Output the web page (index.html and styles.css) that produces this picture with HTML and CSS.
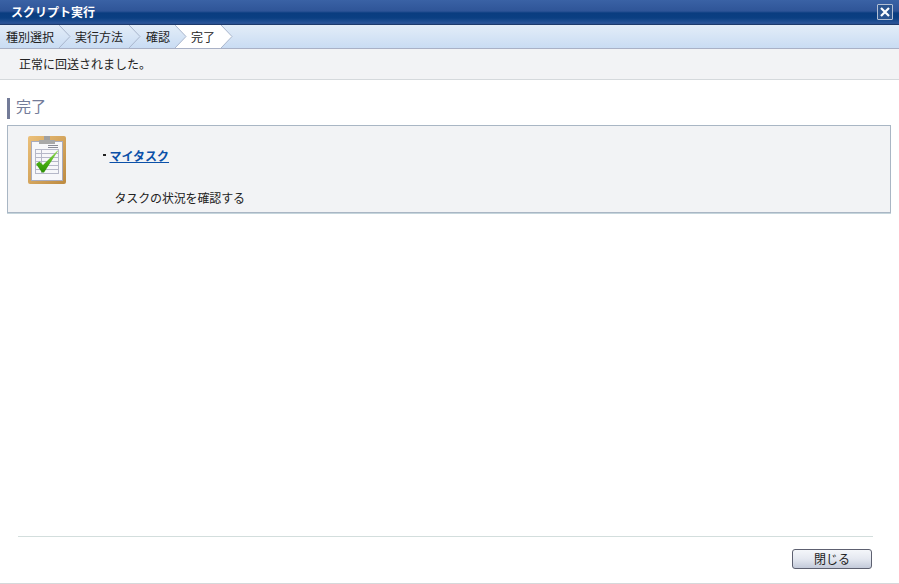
FILE: index.html
```html
<!DOCTYPE html>
<html lang="ja">
<head>
<meta charset="utf-8">
<title>スクリプト実行</title>
<link rel="stylesheet" href="styles.css">
</head>
<body>
<div class="app">
  <header class="titlebar">
    <h1 class="title">スクリプト実行</h1>
    <button class="close" aria-label="閉じる">
      <svg width="14" height="14" viewBox="0 0 14 14"><path d="M3 3l8 8M11 3l-8 8" stroke="#fff" stroke-width="2.2" fill="none"/></svg>
    </button>
  </header>
  <nav class="steps">
    <span class="step step-first">種別選択</span>
    <svg class="chev" width="12" height="23" viewBox="0 0 12 23"><path d="M0 0l11 11.5L0 23" fill="none" stroke="#a9b6cc"/></svg>
    <span class="step">実行方法</span>
    <svg class="chev" width="12" height="23" viewBox="0 0 12 23"><path d="M0 0l11 11.5L0 23" fill="none" stroke="#a9b6cc"/></svg>
    <span class="step step-narrow">確認</span>
    <svg class="chev chev-in" width="12" height="23" viewBox="0 0 12 23"><path d="M0 0h12v23H0l11-11.5z" fill="#fff"/><path d="M0 0l11 11.5L0 23" fill="none" stroke="#a9b6cc"/></svg>
    <span class="step step-current">完了</span>
    <svg class="chev" width="12" height="23" viewBox="0 0 12 23"><path d="M0 0l11 11.5L0 23z" fill="#fff"/><path d="M0 0l11 11.5L0 23" fill="none" stroke="#a9b6cc"/></svg>
  </nav>
  <div class="message">正常に回送されました。</div>
  <main class="content">
    <h2 class="heading">完了</h2>
    <section class="panel">
      <svg class="clip" width="38" height="48" viewBox="0 0 38 48">
        <defs>
          <linearGradient id="b" x1="0" y1="0" x2="1" y2="1"><stop offset="0" stop-color="#ecc07a"/><stop offset="1" stop-color="#bd8a40"/></linearGradient>
          <linearGradient id="g" x1="0" y1="0" x2="0" y2="1"><stop offset="0" stop-color="#9ade5c"/><stop offset=".6" stop-color="#45ab12"/><stop offset="1" stop-color="#2d8f06"/></linearGradient>
        </defs>
        <rect x="0" y="0" width="38" height="48" rx="2" fill="url(#b)"/>
        <rect x="3" y="5" width="32" height="40" fill="#a9abbd"/>
        <rect x="4" y="6" width="30" height="38" fill="#f7f7fa"/>
        <rect x="11" y="4" width="16" height="4" fill="#a8a8a8"/>
        <rect x="16" y="0" width="6" height="4" fill="#a0a0a0"/>
        <path d="M20 9.500h10M20 11.500h10" stroke="#8a8c98"/>
        <path d="M7 13.500h23M7 17.500h23M7 21.500h23M7 25.500h23M7 29.500h23M7 33.500h23M7 37.500h23M7.500 13v25M13.500 13v25M30.500 13v25" stroke="#b6b8c8" fill="none"/>
        <path d="M8 28l3.500-2.500 3.500 3.500L29.500 14.500l.5.5L16 36.500h-2z" fill="url(#g)"/>
      </svg>
      <div class="panel-body">
        <div class="link-row"><span class="bullet"></span><a class="link" href="#">マイタスク</a></div>
        <p class="desc">タスクの状況を確認する</p>
      </div>
    </section>
  </main>
  <footer class="footer">
    <button class="btn">閉じる</button>
  </footer>
</div>
</body>
</html>
```

FILE: styles.css
```css
* { box-sizing: border-box; }
html, body { margin: 0; height: 100%; }
body {
  background: #fff;
  color: #222;
  font-family: "Noto Sans CJK JP", "Liberation Sans", sans-serif;
  font-size: 12px;
  overflow: hidden;
}
.app { display: flex; flex-direction: column; height: 584px; width: 899px; }
.titlebar {
  height: 25px;
  display: flex;
  align-items: center;
  justify-content: space-between;
  padding: 0 6px 0 11px;
  background: linear-gradient(#3a62a5 0, #2f5598 11px, #0a3d80 13px, #0b3f82 18px, #2a5598 23px, #2a4f8f 24px);
  border-bottom: 1px solid #1d3a6c;
}
.title { margin: 0; font-size: 12px; font-weight: 700; color: #fff; line-height: 16px; }
.close {
  width: 16px; height: 16px; padding: 0;
  display: flex; align-items: center; justify-content: center;
  background: #2b548f;
  border: 1px solid #b4c0d4;
  border-radius: 1px;
}
.steps {
  height: 24px;
  display: flex;
  align-items: flex-start;
  background: linear-gradient(#e3edf8, #c9dcf3);
  border-bottom: 1px solid #a9b1c6;
}
.step { height: 23px; line-height: 23px; padding: 0 6px 0 4px; white-space: nowrap; color: #222; }
.step-first { padding: 0 5px 0 6px; }
.step-narrow { padding: 0 5px; }
.step-current { background: #fff; }
.chev { flex: none; display: block; }
.message {
  height: 31px;
  line-height: 30px;
  padding-left: 19px;
  background: #f2f3f5;
  border-bottom: 1px solid #d5d9dc;
}
.content { flex: 1; padding: 18px 8px 0 7px; }
.heading {
  margin: 0;
  height: 21px;
  line-height: 16px;
  border-left: 3px solid #737b98;
  padding-left: 6px;
  font-size: 15px;
  font-weight: 400;
  color: #737b98;
}
.panel {
  margin-top: 6px;
  height: 88px;
  display: flex;
  background: #f2f3f5;
  border: 1px solid #a9b6c4;
  box-shadow: 0 1px 0 #c5d5dc;
  padding: 10px 0 0 20px;
}
.clip { flex: none; display: block; }
.panel-body { margin-left: 37px; }
.link-row { display: flex; align-items: center; height: 18px; margin-top: 10px; }
.bullet { width: 3px; height: 2px; background: #222; margin-right: 4px; }
.link { color: #0b50a8; font-weight: 700; text-decoration: underline; margin-left: -0.5px; }
.desc { margin: 26px 0 0 11.5px; line-height: 16px; color: #222; letter-spacing: -0.15px; }
.footer {
  height: 47px;
  margin: 0 26px 0 18px;
  border-top: 1px solid #d3dedd;
  display: flex;
  justify-content: flex-end;
  align-items: flex-start;
  padding: 12px 1px 0 0;
}
.btn {
  width: 80px; height: 20px; padding: 0;
  font: inherit;
  color: #222;
  background: linear-gradient(#f4f6fa, #e4e8f0 50%, #c3cada);
  border: 1px solid #5d6070;
  border-radius: 3px;
  line-height: 16px;
}
.app::after { content: ""; display: block; height: 1px; background: #d5d8da; }
```
